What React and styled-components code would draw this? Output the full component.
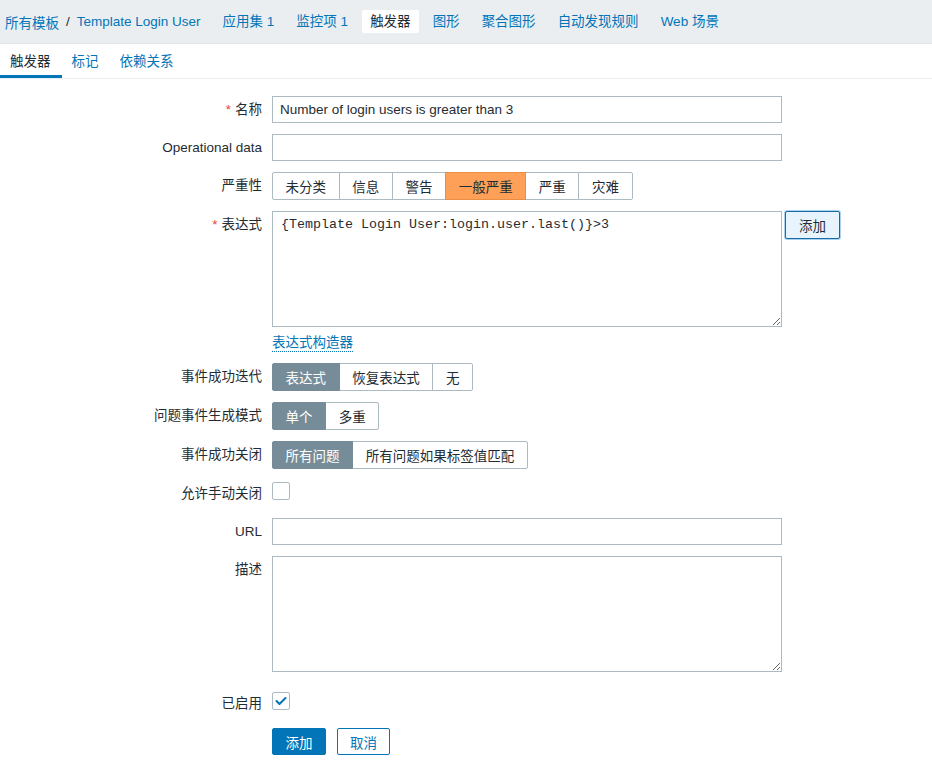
import React from "react";
import styled, { createGlobalStyle } from "styled-components";

const GlobalStyle = createGlobalStyle`
  html, body {
    margin: 0;
    padding: 0;
    background: #ffffff;
  }
  body {
    font-family: "Liberation Sans", "Noto Sans CJK SC", sans-serif;
    font-size: 13.5px;
    color: #1f2c33;
  }
`;

const TopBar = styled.div`
  height: 43px;
  background: #ebeef0;
  border-bottom: 1px solid #dfe4e7;
  display: flex;
  align-items: center;
  padding-left: 5px;
`;

const Crumbs = styled.div`
  display: flex;
  align-items: center;
  margin-right: 14px;
`;

const Crumb = styled.a`
  color: #0275b8;
  text-decoration: none;
`;

const Sep = styled.span`
  color: #1f2c33;
  margin: 0 7px;
`;

const NavList = styled.div`
  display: flex;
  align-items: center;
  gap: 6px;
`;

const NavItem = styled.a`
  padding: 4px 8px;
  line-height: 15px;
  border-radius: 2px;
  text-decoration: none;
  color: ${(p) => (p.$active ? "#1f2c33" : "#0275b8")};
  background: ${(p) => (p.$active ? "#ffffff" : "transparent")};
`;

const SubTabs = styled.div`
  display: flex;
  height: 34px;
  border-bottom: 1px solid #ebeef0;
`;

const SubTab = styled.a`
  display: flex;
  align-items: center;
  padding: 1px 11px 0 10px;
  text-decoration: none;
  color: ${(p) => (p.$active ? "#1f2c33" : "#0275b8")};
  border-bottom: 3px solid ${(p) => (p.$active ? "#0275b8" : "transparent")};
`;

const Form = styled.div`
  display: flex;
  flex-direction: column;
  gap: 11px;
  padding-top: 17px;
`;

const Row = styled.div`
  display: flex;
  align-items: flex-start;
  margin-bottom: ${(p) => p.$extra || 0}px;
`;

const Label = styled.label`
  width: 262px;
  flex-shrink: 0;
  text-align: right;
  line-height: 27px;
  white-space: nowrap;
`;

const Star = styled.span`
  color: #e54444;
  margin-right: 4px;
`;

const Field = styled.div`
  margin-left: 10px;
  display: flex;
  flex-direction: column;
  align-items: flex-start;
`;

const Inline = styled.div`
  display: flex;
  align-items: flex-start;
`;

const TextInput = styled.input`
  box-sizing: border-box;
  width: 510px;
  height: 27px;
  border: 1px solid #acbbc2;
  padding: 0 7px;
  font: inherit;
  color: #1f2c33;
  outline: none;
  margin: 0;
`;

const TextArea = styled.textarea`
  box-sizing: border-box;
  display: block;
  width: 510px;
  height: 116px;
  border: 1px solid #acbbc2;
  padding: 4px 8px;
  margin: 0;
  font-family: ${(p) =>
    p.$mono ? '"Liberation Mono", monospace' : "inherit"};
  font-size: 13.33px;
  line-height: 18px;
  color: #1f2c33;
  outline: none;
`;

const Segmented = styled.div`
  display: flex;
  height: 28px;
`;

const Segment = styled.span`
  box-sizing: border-box;
  height: 28px;
  display: flex;
  align-items: center;
  padding: 0 12.6px;
  border: 1px solid ${(p) => (p.$tone === "orange" ? "#e98e45" : p.$tone === "gray" ? "#768d99" : "#acbbc2")};
  margin-left: -1px;
  background: ${(p) => (p.$tone === "orange" ? "#ffa059" : p.$tone === "gray" ? "#768d99" : "#ffffff")};
  color: ${(p) => (p.$tone === "gray" ? "#ffffff" : "#1f2c33")};
  white-space: nowrap;
  position: relative;
  z-index: ${(p) => (p.$tone ? 1 : 0)};

  &:first-child {
    margin-left: 0;
    border-radius: 2px 0 0 2px;
  }
  &:last-child {
    border-radius: 0 2px 2px 0;
  }
`;

const SideButton = styled.button`
  box-sizing: border-box;
  margin-left: 3px;
  height: 28px;
  width: 55px;
  border: 1px solid #1b6aa3;
  border-radius: 2px;
  background: #e8f4fd;
  box-shadow: 0 0 0 1px #a9d2f0;
  color: #1f2c33;
  font: inherit;
  padding: 0;
`;

const BuilderLink = styled.a`
  margin-top: 7px;
  color: #0275b8;
  text-decoration: none;
  border-bottom: 1px dotted #0275b8;
  line-height: 17px;
`;

const Check = styled.span`
  box-sizing: border-box;
  margin-top: 2px;
  width: 18px;
  height: 18px;
  border: 1px solid #acbbc2;
  border-radius: 2px;
  background: #ffffff;
  display: flex;
  align-items: center;
  justify-content: center;
`;

const Buttons = styled.div`
  display: flex;
  gap: 11px;
`;

const Button = styled.button`
  box-sizing: border-box;
  height: 27px;
  width: ${(p) => (p.$primary ? 54 : 53)}px;
  padding: 0;
  font: inherit;
  border-radius: 2px;
  border: 1px solid #0275b8;
  background: ${(p) => (p.$primary ? "#0275b8" : "#ffffff")};
  color: ${(p) => (p.$primary ? "#ffffff" : "#0275b8")};
`;

const severities = ["未分类", "信息", "警告", "一般严重", "严重", "灾难"];

export default function App() {
  return (
    <>
      <GlobalStyle />
      <TopBar>
        <Crumbs>
          <Crumb>所有模板</Crumb>
          <Sep>/</Sep>
          <Crumb>Template Login User</Crumb>
        </Crumbs>
        <NavList>
          <NavItem>应用集 1</NavItem>
          <NavItem>监控项 1</NavItem>
          <NavItem $active>触发器</NavItem>
          <NavItem>图形</NavItem>
          <NavItem>聚合图形</NavItem>
          <NavItem>自动发现规则</NavItem>
          <NavItem>Web 场景</NavItem>
        </NavList>
      </TopBar>
      <SubTabs>
        <SubTab $active>触发器</SubTab>
        <SubTab>标记</SubTab>
        <SubTab>依赖关系</SubTab>
      </SubTabs>

      <Form>
        <Row>
          <Label>
            <Star>*</Star>名称
          </Label>
          <Field>
            <TextInput defaultValue="Number of login users is greater than 3" />
          </Field>
        </Row>
        <Row>
          <Label>Operational data</Label>
          <Field>
            <TextInput />
          </Field>
        </Row>
        <Row>
          <Label>严重性</Label>
          <Field>
            <Segmented>
              {severities.map((s) => (
                <Segment key={s} $tone={s === "一般严重" ? "orange" : undefined}>
                  {s}
                </Segment>
              ))}
            </Segmented>
          </Field>
        </Row>
        <Row>
          <Label>
            <Star>*</Star>表达式
          </Label>
          <Field>
            <Inline>
              <TextArea $mono defaultValue="{Template Login User:login.user.last()}>3" />
              <SideButton>添加</SideButton>
            </Inline>
            <BuilderLink>表达式构造器</BuilderLink>
          </Field>
        </Row>
        <Row>
          <Label>事件成功迭代</Label>
          <Field>
            <Segmented>
              <Segment $tone="gray">表达式</Segment>
              <Segment>恢复表达式</Segment>
              <Segment>无</Segment>
            </Segmented>
          </Field>
        </Row>
        <Row>
          <Label>问题事件生成模式</Label>
          <Field>
            <Segmented>
              <Segment $tone="gray">单个</Segment>
              <Segment>多重</Segment>
            </Segmented>
          </Field>
        </Row>
        <Row>
          <Label>事件成功关闭</Label>
          <Field>
            <Segmented>
              <Segment $tone="gray">所有问题</Segment>
              <Segment>所有问题如果标签值匹配</Segment>
            </Segmented>
          </Field>
        </Row>
        <Row>
          <Label>允许手动关闭</Label>
          <Field>
            <Check />
          </Field>
        </Row>
        <Row>
          <Label>URL</Label>
          <Field>
            <TextInput />
          </Field>
        </Row>
        <Row $extra={7}>
          <Label>描述</Label>
          <Field>
            <TextArea />
          </Field>
        </Row>
        <Row>
          <Label>已启用</Label>
          <Field>
            <Check>
              <svg width="12" height="10" viewBox="0 0 12 10">
                <polyline
                  points="1.5,5 4.5,8 10.5,2"
                  fill="none"
                  stroke="#0275b8"
                  strokeWidth="2"
                  strokeLinecap="round"
                  strokeLinejoin="round"
                />
              </svg>
            </Check>
          </Field>
        </Row>
        <Row>
          <Label />
          <Field>
            <Buttons>
              <Button $primary>添加</Button>
              <Button>取消</Button>
            </Buttons>
          </Field>
        </Row>
      </Form>
    </>
  );
}
